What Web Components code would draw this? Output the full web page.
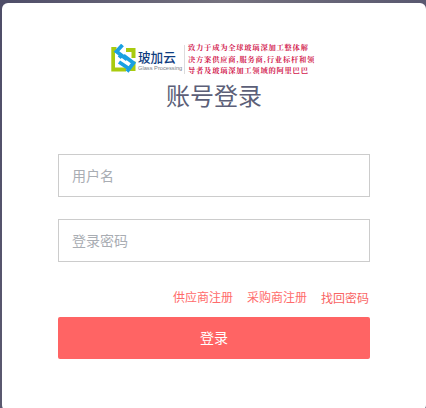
<!DOCTYPE html>
<html lang="zh"><head><meta charset="utf-8"><title>账号登录</title>
<style>
html,body{margin:0;height:408px;overflow:hidden}
body{background:linear-gradient(100deg,#4e4d68 0%,#75727f 45%,#4f4f6a 100%);font-family:"Noto Sans CJK SC","Liberation Sans",sans-serif}
</style></head><body>
<login-card>
  <brand-logo></brand-logo>
  <login-title>账号登录</login-title>
  <text-field placeholder="用户名"></text-field>
  <text-field placeholder="登录密码"></text-field>
  <link-row></link-row>
  <login-button>登录</login-button>
</login-card>
<script>
class Base extends HTMLElement{
  render(html){this.attachShadow({mode:'open'}).innerHTML=html}
}
customElements.define('login-card',class extends Base{connectedCallback(){this.render(`<style>
:host{display:block;box-sizing:border-box;margin:3px 0 0 2px;height:408px;background:#fff;border-radius:6px;padding:41px 56px 0}
</style><slot></slot>`)}});
customElements.define('login-title',class extends Base{connectedCallback(){this.render(`<style>
:host{display:block;margin:2px 0 41px;font:400 24px/36px "Noto Sans CJK SC",sans-serif;color:#5c5f78;text-align:center}
</style><slot></slot>`)}});
customElements.define('brand-logo',class extends Base{connectedCallback(){this.render(`<style>
:host{display:flex;align-items:center;height:31px;padding-left:52px}
svg{display:block;flex:none}
.name{display:flex;flex-direction:column;flex:none;width:46px;margin-left:2px;padding-top:1px}
.cn{font:500 12.6px/15px "Noto Sans CJK SC",sans-serif;color:#0f3d80;white-space:nowrap}
.en{font:5.700px/8px "Liberation Sans",sans-serif;color:#7b8085;white-space:nowrap}
.sep{flex:none;width:1px;height:29px;background:#dcdcdc;margin:0 3px 0 0}
.slogan{font:700 7.3px/11.500px "Noto Serif CJK SC","Noto Sans CJK SC",serif;color:#d2194e;letter-spacing:.75px;white-space:nowrap}
</style>
<svg width="26" height="31" viewBox="2 2 26 31" aria-hidden="true">
<path d="M3.300 5H8.500V8.500H7V25.500H18V29.500H3.300ZM18 6H27.500V16H23.500V10H18ZM24 19.500H27.500V29H21V26H24Z" fill="#a9cb0e"/>
<path d="M14.500 3L8.500 9.500L19 17.500M11 13L14 15.500M15.500 13.500L25.500 21L19 29.500M11 20L20 26" fill="none" stroke="#1aa0e2" stroke-width="3.800"/>
</svg>
<div class="name"><span class="cn">玻加云</span><span class="en">Glass Processing</span></div>
<div class="sep"></div>
<div class="slogan">致力于成为全球玻璃深加工整体解<br>决方案供应商,服务商,行业标杆和领<br>导者及玻璃深加工领域的阿里巴巴</div>`)}});
customElements.define('text-field',class extends Base{connectedCallback(){this.render(`<style>
:host{display:block;margin-bottom:22px}
input{display:block;box-sizing:border-box;width:100%;height:43px;border:1px solid #ccc;border-radius:0;outline:0;padding:0 13px 2px;background:#fff;font:14px "Noto Sans CJK SC",sans-serif;color:#555}
input::placeholder{color:#a9adb3;opacity:1}
</style><input placeholder="${this.getAttribute('placeholder')}">`)}});
customElements.define('link-row',class extends Base{connectedCallback(){this.render(`<style>
:host{display:flex;justify-content:flex-end;gap:14px;height:34px;margin-top:-1px;padding-top:5px;padding-right:1px;box-sizing:border-box;font:12px/18px "Noto Sans CJK SC",sans-serif}
a{color:#ff6b6b;text-decoration:none}
a:last-child{color:#f96464;margin-top:1px}
</style><a href="#">供应商注册</a><a href="#">采购商注册</a><a href="#">找回密码</a>`)}});
customElements.define('login-button',class extends Base{connectedCallback(){this.render(`<style>
:host{display:flex;align-items:center;justify-content:center;box-sizing:border-box;height:42px;padding-bottom:2px;background:#ff6464;border-radius:2px;color:#fff;font:400 14px "Noto Sans CJK SC",sans-serif}
</style><slot></slot>`)}});
</script>
</body></html>
